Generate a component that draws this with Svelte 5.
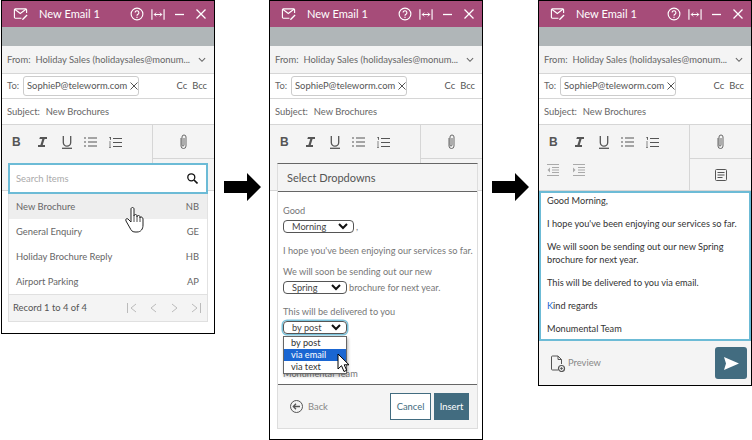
<script>
  const items = [
    ['New Brochure', 'NB'],
    ['General Enquiry', 'GE'],
    ['Holiday Brochure Reply', 'HB'],
    ['Airport Parking', 'AP']
  ];
</script>

{#snippet top()}
  <div class="title">
    <svg class="mail" width="15" height="14" viewBox="0 0 16 14" fill="none" stroke="#fff" stroke-width="1.2"><path d="M9 11.5H2.500a1 1 0 0 1-1-1v-8a1 1 0 0 1 1-1h11a1 1 0 0 1 1 1V6"/><path d="M1.800 2l6 4.500 6-4.500"/><path d="M10 12l4.500-4.500 1 1L11 13l-1.300.3z" fill="#fff" stroke="none"/></svg>
    <span class="name">New Email 1</span>
    <svg class="help" width="14" height="14" viewBox="0 0 15 15" fill="none" stroke="#fff" stroke-width="1.2"><circle cx="7.500" cy="7.500" r="6.300"/><path d="M5.500 6a2 2 0 1 1 3 1.800c-.7.4-1 .8-1 1.500"/><path d="M7.500 10.500v1.200"/></svg>
    <svg class="expand" width="14" height="13" viewBox="0 0 15 13" fill="none" stroke="#fff" stroke-width="1.2"><path d="M1 1v11M14 1v11"/><path d="M3.500 6.500h8"/><path d="M5.500 4.500l-2 2 2 2M9.500 4.500l2 2-2 2" stroke-width="1"/></svg>
    <svg class="min" width="9" height="10" viewBox="0 0 9 10" stroke="#fff" stroke-width="1.300"><path d="M0 5.500h9"/></svg>
    <svg class="close" width="10" height="10" viewBox="0 0 10 10" stroke="#fff" stroke-width="1.300"><path d="M.5.5l9 9M9.500.5l-9 9"/></svg>
  </div>
  <div class="strip"></div>
  <div class="row from">
    <span class="lbl">From:</span><span class="val fromval">Holiday Sales (holidaysales@monum...</span>
    <svg class="chev" width="8" height="6" viewBox="0 0 9 6" fill="none" stroke="#666" stroke-width="1.2"><path d="M1 1l3.500 3.500L8 1"/></svg>
  </div>
  <div class="row to">
    <span class="lbl">To:</span>
    <span class="chip">SophieP@teleworm.com<svg width="8" height="8" viewBox="0 0 8 8" stroke="#555"><path d="M.5.500l7 7M7.500.500l-7 7"/></svg></span>
    <span class="cc">Cc</span><span class="bcc">Bcc</span>
  </div>
  <div class="row subject"><span class="lbl">Subject:</span><span class="val">New Brochures</span></div>
{/snippet}

{#snippet tools(indent)}
  <div class="tools">
    <div class="fmt">
      <div class="fmtrow">
        <b class="t-b">B</b>
        <svg class="t-i" width="9" height="10" viewBox="0 0 9 10" fill="#555"><path d="M2 0h7v2H6.600L4.700 8H7v2H0V8h2.400L4.300 2H1.300z"/></svg>
        <svg class="t-u" width="10" height="13" viewBox="0 0 10 13" fill="none" stroke="#555" stroke-width="1.3"><path d="M1.300 0v6.500a3.700 3.700 0 0 0 7.400 0V0"/><path d="M0 12.300h10"/></svg>
        <svg class="t-l" width="13" height="10" viewBox="0 0 13 10" stroke="#555"><path d="M0 1h2M4 1h9M0 5h2M4 5h9M0 9h2M4 9h9" stroke-width="1.200"/></svg>
        <svg class="t-n" width="13" height="11" viewBox="0 0 13 11" stroke="#555"><path d="M4 1.500h9M4 5.500h9M4 9.500h9" stroke-width="1.200"/><path d="M.5 0h1v3M0 5h2M0 7h2M0 9h2M0 10.500h2" stroke-width=".7"/></svg>
      </div>
      {#if indent}
        <div class="fmtrow lower">
          <svg width="12" height="12" viewBox="0 0 12 12" stroke="#aaa"><path d="M0 .5h12M5 3.500h7M5 6h7M5 8.500h7M0 11.500h12"/><path d="M3 3.500L.5 6 3 8.500z" fill="#aaa" stroke="none"/></svg>
          <svg width="12" height="12" viewBox="0 0 12 12" stroke="#aaa"><path d="M0 .5h12M5 3.500h7M5 6h7M5 8.500h7M0 11.500h12"/><path d="M0 3.500L2.500 6 0 8.500z" fill="#aaa" stroke="none"/></svg>
        </div>
      {/if}
    </div>
    <div class="side">
      <div class="clip">
        <svg width="9" height="16" viewBox="0 0 9 16" fill="none" stroke="#666" stroke-width="1"><path d="M2 4v8a2.500 2.500 0 0 0 5 0V3a2 2 0 0 0-4 0v8a.9.900 0 0 0 2 0V4"/></svg>
      </div>
      <div class="note">
        {#if indent}
          <svg width="12" height="12" viewBox="0 0 12 12" fill="none" stroke="#555"><rect x=".5" y=".5" width="11" height="11" rx="1"/><path d="M2.500 3.500h7M2.500 6h7M2.500 8.500h5"/></svg>
        {/if}
      </div>
    </div>
  </div>
{/snippet}

{#snippet arrow()}
  <svg class="bigarrow" width="37" height="28" viewBox="0 0 37 28" fill="#000"><path d="M0 8h23V0l14 14-14 14v-8H0z"/></svg>
{/snippet}

<div class="stage">
  <section class="panel first">
    {@render top()}
    {@render tools(false)}
    <div class="pop">
      <div class="search">
        <span>Search Items</span>
        <svg width="11" height="11" viewBox="0 0 11 11" fill="none" stroke="#111" stroke-width="1.300"><circle cx="4.300" cy="4.300" r="3.500"/><path d="M7 7l3.500 3.500" stroke-width="1.600"/></svg>
      </div>
      {#each items as it, i}
        <div class="item" class:hot={i === 0}><span>{it[0]}</span><span>{it[1]}</span></div>
      {/each}
      <div class="pager">
        <span>Record 1 to 4 of 4</span>
        <svg width="74" height="10" viewBox="0 0 74 10" fill="none" stroke="#bbb"><path d="M.5 0v10M9 1L4 5l5 4M29 1l-5 4 5 4M45 1l5 4-5 4M65 1l5 4-5 4M73.500 0v10"/></svg>
      </div>
      <svg class="hand" width="20" height="26" viewBox="0 0 20 26"><path d="M6 2c0-2 3-2 3 0v7c0-2 3-2 3 0v1c0-2 3-2 3 0v1c0-2 3-1 3 1v6c0 4-2 7-6 7H10c-3 0-4-2-5-4L1 14c-1-2 1-3 2-2l3 3z" fill="#fff" stroke="#222" stroke-width="1"/><path d="M9 9v6M12 10v5M15 11v4" stroke="#222" stroke-width=".8"/></svg>
    </div>
  </section>

  <div class="gap one">{@render arrow()}</div>

  <section class="panel second">
    {@render top()}
    {@render tools(false)}
    <div class="card">
      <div class="cardhead">Select Dropdowns</div>
      <div class="cardbody">
        <p class="good">Good</p>
        <p class="sel-line l1"><span class="sel morning">Morning<svg width="10" height="7" viewBox="0 0 10 7" fill="none" stroke="#111" stroke-width="2"><path d="M1 1l4 4 4-4"/></svg></span>,</p>
        <p class="hope">I hope you've been enjoying our services so far.</p>
        <p class="soon">We will soon be sending out our new</p>
        <p class="sel-line l2"><span class="sel spring">Spring<svg width="10" height="7" viewBox="0 0 10 7" fill="none" stroke="#111" stroke-width="2"><path d="M1 1l4 4 4-4"/></svg></span> brochure for next year.</p>
        <p class="will">This will be delivered to you</p>
        <p class="sel-line l3"><span class="sel post">by post<svg width="10" height="7" viewBox="0 0 10 7" fill="none" stroke="#111" stroke-width="2"><path d="M1 1l4 4 4-4"/></svg></span></p>
        <div class="menu">
          <div>by post</div>
          <div class="on">via email</div>
          <div>via text</div>
        </div>
        <svg class="ptr" width="13" height="20" viewBox="0 0 13 20"><path d="M1 1v15l3.500-3.300L7 18.500l2.700-1.200-2.500-5.500H12z" fill="#fff" stroke="#000"/></svg>
      </div>
      <div class="cardfoot">
        <span class="back">
          <svg width="13" height="13" viewBox="0 0 13 13" fill="none" stroke="#555"><circle cx="6.500" cy="6.500" r="6"/><path d="M10 6.500H3.500M6 3.800L3.300 6.500 6 9.200" stroke-width="1.300"/></svg>
          Back
        </span>
        <span class="btn cancel">Cancel</span>
        <span class="btn insert">Insert</span>
      </div>
    </div>
  </section>

  <div class="gap two">{@render arrow()}</div>

  <section class="panel third">
    {@render top()}
    {@render tools(true)}
    <div class="editor">
      <p>Good Morning,</p>
      <p>I hope you've been enjoying our services so far.</p>
      <p>We will soon be sending out our new Spring brochure for next year.</p>
      <p>This will be delivered to you via email.</p>
      <p><span class="k">K</span>ind regards</p>
      <p>Monumental Team</p>
    </div>
    <div class="foot">
      <span class="preview">
        <svg width="16" height="17" viewBox="0 0 16 17" fill="none" stroke="#555"><path d="M8 15H2.500a1 1 0 0 1-1-1V2a1 1 0 0 1 1-1H8l3.500 3.500V9"/><path d="M8 1v3.500h3.500"/><circle cx="11.500" cy="13.500" r="3" stroke-width="1.200"/><circle cx="11.500" cy="13.500" r=".8" fill="#555"/></svg>
        Preview
      </span>
      <span class="send"><svg width="15" height="13" viewBox="0 0 15 13" fill="#fff"><path d="M0 0l15 6.500L0 13l2-6.500z"/></svg></span>
    </div>
  </section>
</div>

<style>
  :global(body) { background: #fff; }
  .stage {
    width: 752px; height: 440px; display: flex; align-items: flex-start;
    font: 9.4px/1.2 Lato, "Liberation Sans", sans-serif; color: #555; overflow: hidden;
    padding-left: 1px; box-sizing: border-box;
  }
  .panel { position: relative; width: 214px; box-sizing: border-box; border: 1px solid #000; flex: none; background: #fff; display: flex; flex-direction: column; }
  .first { height: 334px; }
  .second { height: 440px; }
  .third { height: 386px; }
  .gap { width: 54px; flex: none; display: flex; justify-content: center; padding-top: 173px; }
  .gap.two { width: 55px; }
  .bigarrow { display: block; }

  .title { height: 26px; background: #a64c79; color: #fff; display: flex; align-items: center; padding-left: 11px; font-size: 11.1px; }
  .mail { margin-right: 11px; }
  .name { width: 91px; }
  .help { margin-right: 7px; }
  .expand { margin-right: 10px; }
  .min { margin-right: 12px; }
  .strip { height: 19px; background: #b0b6b8; }
  .row { display: flex; align-items: center; box-sizing: border-box; padding: 0 7px 0 5px; border-bottom: 1px solid #d6d6d6; white-space: nowrap; }
  .from { height: 28px; background: #f4f4f4; }
  .lbl { color: #666; }
  .fromval { margin-left: 5px; width: 161px; }
  .val { color: #666; }
  .chev { margin-left: 1px; flex: none; }
  .to { height: 25px; }
  .chip { margin-left: 4px; width: 116px; height: 20px; box-sizing: border-box; border: 1px solid #ccc; border-radius: 3px; display: flex; align-items: center; gap: 3px; padding-left: 3px; color: #555; }
  .chip svg { flex: none; }
  .cc { margin-left: auto; }
  .bcc { margin-left: 5px; }
  .subject { height: 26px; }
  .subject .val { margin-left: 6px; }

  .tools { display: flex; height: 66px; background: #f4f4f4; border-bottom: 1px solid #d6d6d6; box-sizing: border-box; }
  .fmt { width: 150px; }
  .fmtrow { display: flex; align-items: center; height: 34px; padding-left: 10px; }
  .t-b { font-size: 12px; color: #555; width: 8px; margin-right: 18px; font-family: "Liberation Sans", sans-serif; }
  .t-i { margin-right: 15px; }
  .t-u { margin-right: 12px; }
  .t-l { margin-right: 12px; }
  .lower { height: 22px; padding-left: 8px; gap: 14px; }
  .side { flex: 1; border-left: 1px solid #d6d6d6; display: flex; flex-direction: column; }
  .clip { height: 33px; border-bottom: 1px solid #d6d6d6; display: flex; align-items: center; justify-content: center; }
  .note { flex: 1; display: flex; align-items: center; justify-content: center; }

  .pop { position: absolute; left: 6px; top: 162px; width: 200px; }
  .search { height: 31px; box-sizing: border-box; border: 2px solid #6cbbd6; background: #fff; display: flex; align-items: center; justify-content: space-between; padding: 0 8px 0 6px; color: #aaa; }
  .item { height: 25px; display: flex; align-items: center; justify-content: space-between; padding: 0 8px 0 7px; background: #fff; border-left: 1px solid #e2e2e2; border-right: 1px solid #e2e2e2; color: #666; }
  .item.hot { background: #eee; }
  .pager { height: 28px; box-sizing: border-box; background: #f4f4f4; border: 1px solid #e0e0e0; display: flex; align-items: center; justify-content: space-between; padding: 0 6px 0 4px; color: #555; }
  .hand { position: absolute; left: 117px; top: 44px; }

  .card { position: absolute; left: 7px; top: 162px; width: 201px; height: 266px; box-sizing: border-box; background: #fff; border: 1px solid #ddd; border-top: 1px solid #666; display: flex; flex-direction: column; }
  .cardhead { height: 28px; flex: none; box-sizing: border-box; background: #f4f4f4; border-bottom: 1px solid #666; display: flex; align-items: center; padding-left: 9px; font-size: 11px; color: #555; }
  .cardbody { position: relative; flex: 1; padding: 13px 5px 0; color: #777; font-size: 9.2px; }
  .cardbody::after { content: "Monumental Team"; position: absolute; left: 5px; top: 176px; }
  .cardbody p { margin: 0; white-space: nowrap; height: 12px; }
  .cardbody p.sel-line { height: 13px; display: flex; align-items: center; gap: 2px; }
  .l1 { margin-top: 3px !important; }
  .hope { margin-top: 12px !important; }
  .soon { margin-top: 9px !important; }
  .l2 { margin-top: 3px !important; }
  .will { margin-top: 12px !important; }
  .l3 { margin-top: 3px !important; }
  .sel { box-sizing: border-box; height: 13px; width: 71px; border: 1px solid #555; border-radius: 4px; display: flex; align-items: center; justify-content: space-between; padding: 0 5px 0 8px; color: #444; }
  .spring, .post { width: 64px; }
  .post { box-shadow: 0 0 0 1.500px #7cc4dc; }
  .menu { position: absolute; z-index: 1; left: 5px; top: 144px; width: 64px; box-sizing: border-box; background: #fff; border: 1px solid #666; box-shadow: 1px 2px 3px rgba(0,0,0,.3); color: #333; }
  .menu div { height: 12px; line-height: 12px; padding-left: 7px; }
  .menu .on { background: #1a66d2; color: #fff; }
  .ptr { position: absolute; z-index: 2; left: 59px; top: 161px; }
  .cardfoot { height: 44px; flex: none; box-sizing: border-box; background: #f4f4f4; border-top: 1px solid #666; display: flex; align-items: center; padding: 0 8px 0 12px; }
  .back { display: flex; align-items: center; gap: 5px; color: #888; margin-right: auto; }
  .btn { height: 27px; box-sizing: border-box; display: flex; align-items: center; justify-content: center; }
  .cancel { width: 41px; border: 1px solid #426c80; background: #fff; color: #426c80; margin-right: 3px; }
  .insert { width: 35px; background: #426c80; color: #fff; }

  .editor { height: 150px; flex: none; box-sizing: border-box; border: 2px solid #6cbbd6; padding: 2px 6px 0 6px; color: #333; font-size: 9.2px; }
  .editor p { margin: 0 0 10.500px; line-height: 12.500px; }
  .k { color: #1a66d2; }
  .foot { flex: 1; background: #f4f4f4; display: flex; align-items: center; justify-content: space-between; padding: 0 4px 0 11px; }
  .preview { display: flex; align-items: center; gap: 2px; color: #888; }
  .send { width: 32px; height: 32px; border-radius: 3px; background: #426c80; display: flex; align-items: center; justify-content: center; }
</style>
